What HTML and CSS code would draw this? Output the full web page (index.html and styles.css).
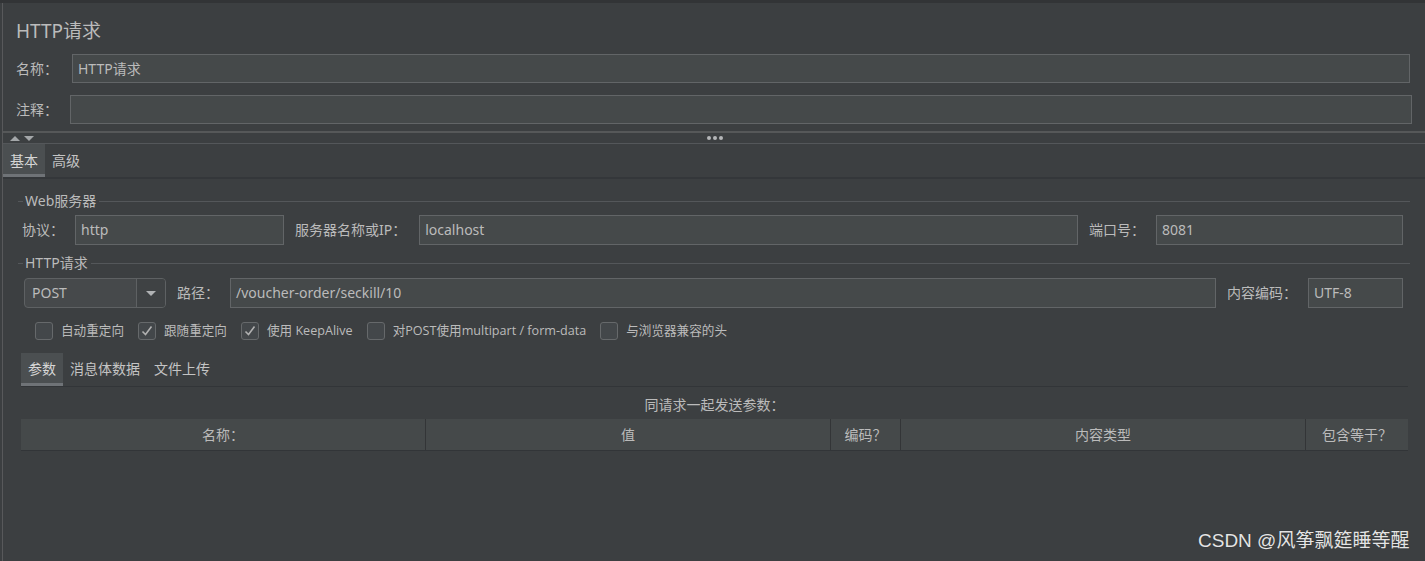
FILE: index.html
```html
<!DOCTYPE html>
<html lang="zh-CN">
<head>
<meta charset="utf-8">
<title>HTTP请求</title>
<link rel="stylesheet" href="styles.css">
</head>
<body>
<div class="top-strip"></div>
<div class="frame">
  <div class="head">
    <div class="title">HTTP请求</div>
    <div class="row name-row"><span class="lbl">名称：</span><div class="input">HTTP请求</div></div>
    <div class="row comment-row"><span class="lbl">注释：</span><div class="input"></div></div>
  </div>
  <div class="splitter">
    <div class="arrows"><span class="tri-up"></span><span class="tri-down"></span></div>
    <div class="dots"><i></i><i></i><i></i></div>
  </div>
  <div class="tabs">
    <div class="tab active">基本</div>
    <div class="tab">高级</div>
  </div>
  <div class="content">
    <div class="group-title"><span class="gl-short"></span><span class="gt">Web服务器</span><span class="gl"></span></div>
    <div class="row server-row">
      <span class="lbl">协议：</span>
      <div class="input w-proto">http</div>
      <span class="lbl lbl-host">服务器名称或IP：</span>
      <div class="input grow">localhost</div>
      <span class="lbl">端口号：</span>
      <div class="input w-port">8081</div>
    </div>
    <div class="group-title g2"><span class="gl-short"></span><span class="gt">HTTP请求</span><span class="gl"></span></div>
    <div class="row req-row">
      <div class="select"><span class="sel-val">POST</span><span class="sel-btn"><span class="sel-tri"></span></span></div>
      <span class="lbl">路径：</span>
      <div class="input grow">/voucher-order/seckill/10</div>
      <span class="lbl">内容编码：</span>
      <div class="input w-enc">UTF-8</div>
    </div>
    <div class="checks">
      <label class="chk"><span class="box"></span><span class="ct">自动重定向</span></label>
      <label class="chk"><span class="box"><svg viewBox="0 0 18 18" width="18" height="18"><path d="M4.5 9.5 L7.5 12.5 L13.5 4.5" fill="none" stroke="#b0b0b0" stroke-width="1.6"/></svg></span><span class="ct">跟随重定向</span></label>
      <label class="chk"><span class="box"><svg viewBox="0 0 18 18" width="18" height="18"><path d="M4.5 9.5 L7.5 12.5 L13.5 4.5" fill="none" stroke="#b0b0b0" stroke-width="1.6"/></svg></span><span class="ct">使用 KeepAlive</span></label>
      <label class="chk"><span class="box"></span><span class="ct">对POST使用multipart / form-data</span></label>
      <label class="chk"><span class="box"></span><span class="ct">与浏览器兼容的头</span></label>
    </div>
    <div class="subtabs">
      <div class="stab active">参数</div>
      <div class="stab">消息体数据</div>
      <div class="stab">文件上传</div>
    </div>
    <div class="params-caption">同请求一起发送参数：</div>
    <div class="table-head">
      <div class="th">名称：</div>
      <div class="th">值</div>
      <div class="th">编码？</div>
      <div class="th">内容类型</div>
      <div class="th last">包含等于？</div>
    </div>
  </div>
</div>
<div class="watermark">CSDN @风筝飘筵睡等醒</div>
</body>
</html>
```
FILE: styles.css
```css
html, body {
  margin: 0;
  padding: 0;
}
body {
  width: 1425px;
  height: 561px;
  overflow: hidden;
  background: #3c3f41;
  color: #bbbbbb;
  font-family: "Noto Sans", "Noto Sans CJK SC", sans-serif;
  font-size: 14px;
  position: relative;
}
.top-strip {
  height: 3px;
  background: #323436;
}
.frame {
  margin-left: 2px;
  border-left: 1px solid #58595b;
  height: 558px;
  box-sizing: border-box;
}
.head {
  padding: 16px 15px 0 13px;
}
.title {
  font-size: 19px;
  line-height: 24px;
  height: 24px;
  color: #bbbbbb;
}
.row {
  display: flex;
  align-items: center;
  gap: 14px;
}
.lbl {
  white-space: nowrap;
  line-height: 20px;
}
.input {
  box-sizing: border-box;
  background: #45494a;
  border: 1px solid #626567;
  height: 29px;
  line-height: 27px;
  padding-left: 5px;
  color: #bbbbbb;
  white-space: nowrap;
  overflow: hidden;
}
.head .input {
  flex: 1;
}
.name-row {
  margin-top: 11px;
}
.comment-row {
  margin-top: 12px;
  gap: 12px;
  margin-right: -2px;
}
.splitter {
  margin-top: 7px;
  border-top: 2px solid #565859;
  border-bottom: 1px solid #54575a;
  height: 10px;
  display: flex;
  align-items: center;
  position: relative;
}
.arrows {
  display: flex;
  gap: 4px;
  padding-left: 7px;
}
.tri-up, .tri-down {
  width: 0;
  height: 0;
  border-left: 5px solid transparent;
  border-right: 5px solid transparent;
}
.tri-up {
  border-bottom: 5px solid #a4a7a9;
}
.tri-down {
  border-top: 5px solid #a4a7a9;
}
.dots {
  display: flex;
  gap: 2px;
  margin-left: 673px;
}
.dots i {
  width: 4px;
  height: 4px;
  border-radius: 50%;
  background: #b4b6b8;
  display: block;
}
.tabs {
  display: flex;
  height: 33px;
  border-bottom: 2px solid #34373a;
}
.tab {
  padding: 1px 7px 0;
  line-height: 32px;
  font-size: 14px;
  box-sizing: border-box;
  height: 33px;
  color: #c4c4c4;
}
.tab.active {
  background: #4b4f51;
  border-bottom: 3px solid #6f7377;
  color: #d6d6d6;
}
.content {
  padding: 0 15px 0 15px;
}
.group-title {
  display: flex;
  align-items: center;
  height: 16px;
  margin-top: 14px;
}
.group-title.g2 {
  margin-top: 10px;
}
.gl-short {
  width: 5px;
  height: 1px;
  background: #54575a;
}
.gl {
  flex: 1;
  height: 1px;
  background: #54575a;
}
.gt {
  padding: 0 3px 0 2px;
  line-height: 16px;
  font-size: 14px;
}
.server-row {
  margin-top: 6px;
  padding-left: 4px;
  padding-right: 7px;
  gap: 11px;
}
.lbl-host {
  margin-right: 2px;
}
.server-row .input, .req-row .input {
  height: 30px;
  line-height: 28px;
}
.grow {
  flex: 1;
}
.w-proto {
  width: 209px;
}
.w-port {
  width: 247px;
}
.w-enc {
  width: 95px;
}
.req-row {
  margin-top: 7px;
  padding-left: 6px;
  padding-right: 7px;
  gap: 11px;
}
.select {
  box-sizing: border-box;
  width: 142px;
  height: 30px;
  border: 1px solid #5e6163;
  border-radius: 4px;
  background: #46494b;
  display: flex;
  overflow: hidden;
}
.sel-val {
  flex: 1;
  padding-left: 7px;
  line-height: 28px;
}
.sel-btn {
  width: 28px;
  border-left: 1px solid #5e6163;
  background: #3f4244;
  display: flex;
  align-items: center;
  justify-content: center;
}
.sel-tri {
  width: 0;
  height: 0;
  border-left: 5px solid transparent;
  border-right: 5px solid transparent;
  border-top: 5px solid #b0b2b4;
}
.checks {
  display: flex;
  align-items: center;
  margin-top: 14px;
  padding-left: 17px;
  height: 18px;
}
.chk {
  display: flex;
  align-items: center;
  margin-right: 14px;
}
.box {
  box-sizing: border-box;
  width: 18px;
  height: 18px;
  border: 1px solid #66696b;
  border-radius: 3px;
  background: #43474a;
  margin-right: 8px;
  display: flex;
  align-items: center;
  justify-content: center;
  overflow: hidden;
}
.box svg {
  display: block;
  flex: none;
}
.ct {
  font-family: "Open Sans", "Noto Sans CJK SC", sans-serif;
  font-size: 12.6px;
  line-height: 18px;
  white-space: nowrap;
}
.subtabs {
  display: flex;
  margin: 13px 2px 0 3px;
  height: 33px;
  border-bottom: 1px solid #323538;
}
.stab {
  padding: 0 7px;
  line-height: 31px;
  height: 33px;
  box-sizing: border-box;
  color: #c4c4c4;
}
.stab.active {
  background: #4b4f51;
  border-bottom: 3px solid #6f7377;
  color: #d6d6d6;
}
.params-caption {
  text-align: center;
  margin: 8px 2px 0 3px;
  line-height: 20px;
}
.table-head {
  display: grid;
  grid-template-columns: 405px 405px 70px 405px 1fr;
  margin: 4px 2px 0 3px;
  background: #45494a;
  border-bottom: 1px solid #323538;
  height: 32px;
  box-sizing: border-box;
}
.th {
  text-align: center;
  line-height: 31px;
  border-right: 1px solid #333537;
}
.th.last {
  border-right: none;
}
.watermark {
  position: absolute;
  left: 1198px;
  top: 529px;
  font-family: "Liberation Sans", "Noto Sans CJK SC", sans-serif;
  font-size: 19px;
  line-height: 24px;
  color: #e4e4e4;
  text-shadow: 0 0 1px rgba(0,0,0,0.4);
  white-space: nowrap;
}
```
